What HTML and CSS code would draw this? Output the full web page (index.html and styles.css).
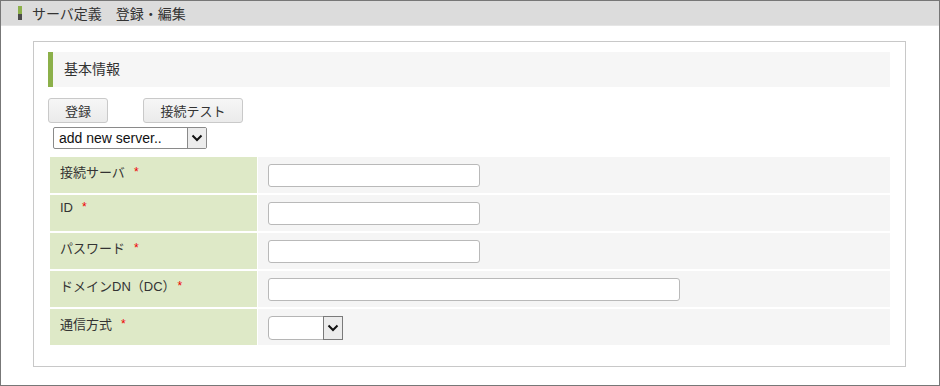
FILE: index.html
```html
<!DOCTYPE html>
<html lang="ja">
<head>
  <meta charset="UTF-8">
  <title>サーバ定義 登録・編集</title>
  <link rel="stylesheet" href="styles.css">
</head>
<body>
  <div class="frame">
    <div class="titlebar">
      <span class="marker"></span>
      <span class="title">サーバ定義　登録・編集</span>
    </div>

    <div class="panel">
      <h2 class="section">基本情報</h2>

      <div class="buttons">
        <button type="button" class="btn btn-save">登録</button>
        <button type="button" class="btn btn-test">接続テスト</button>
      </div>

      <div class="select select-server">
        <span class="select-text">add new server..</span>
        <span class="select-arrow">
          <svg width="12" height="8" viewBox="0 0 12 8"><path d="M1.5 1.5 L6 6 L10.5 1.5" fill="none" stroke="#111" stroke-width="2"/></svg>
        </span>
      </div>

      <div class="form">
        <div class="label">接続サーバ<span class="req">*</span></div>
        <div class="value"><input type="text" class="field"></div>

        <div class="label">ID<span class="req">*</span></div>
        <div class="value"><input type="text" class="field"></div>

        <div class="label">パスワード<span class="req">*</span></div>
        <div class="value"><input type="password" class="field"></div>

        <div class="label">ドメインDN（DC）<span class="req req-wide">*</span></div>
        <div class="value"><input type="text" class="field field-wide"></div>

        <div class="label">通信方式<span class="req">*</span></div>
        <div class="value">
          <div class="select select-mode">
            <span class="select-text"></span>
            <span class="select-arrow">
              <svg width="12" height="8" viewBox="0 0 12 8"><path d="M1.5 1.5 L6 6 L10.5 1.5" fill="none" stroke="#111" stroke-width="2"/></svg>
            </span>
          </div>
        </div>
      </div>
    </div>
  </div>
</body>
</html>
```

FILE: styles.css
```css
:root {
  --green: #8cb04a;
  --label-bg: #dee9c7;
  --value-bg: #f5f5f5;
  --text: #333;
}

* {
  box-sizing: border-box;
}

body {
  margin: 0;
  padding: 0;
  font-family: "Liberation Sans", "Noto Sans CJK JP", sans-serif;
  color: var(--text);
  background: #fff;
}

.frame {
  width: 940px;
  height: 386px;
  border: 1px solid #777;
  overflow: hidden;
}

.titlebar {
  height: 25px;
  background: #dcdcdc;
  border-bottom: 1px solid #e6e6e6;
  display: flex;
  align-items: center;
  padding-left: 17px;
}

.marker {
  width: 4px;
  height: 14px;
  background: linear-gradient(to bottom, var(--green) 0 8px, #4b4b4b 8px);
  margin-right: 10px;
}

.title {
  font-size: 14px;
  color: #333;
}

.panel {
  margin: 15px 33px 0 32px;
  height: 326px;
  border: 1px solid #c8c8c8;
  padding: 10px 15px 10px 14px;
}

.section {
  margin: 0;
  height: 35px;
  line-height: 35px;
  font-size: 14px;
  font-weight: normal;
  padding-left: 11px;
  border-left: 5px solid var(--green);
  background: #f6f6f6;
}

.buttons {
  display: flex;
  gap: 35px;
  margin-top: 11px;
}

.btn {
  height: 25px;
  font-family: inherit;
  font-size: 13px;
  color: #333;
  background: linear-gradient(to bottom, #f6f6f6, #ebebeb);
  border: 1px solid #c9c9c9;
  border-radius: 3px;
  padding: 0;
}

.btn-save {
  width: 60px;
}

.btn-test {
  width: 100px;
}

.select {
  display: flex;
  background: #fff;
  border: 1px solid #8a8a8a;
  border-radius: 2px;
  font-size: 14px;
}

.select-text {
  flex: 1;
  padding-left: 5px;
  color: #111;
}

.select-arrow {
  width: 19px;
  background: #ececec;
  border-left: 1px solid #8a8a8a;
  display: flex;
  align-items: center;
  justify-content: center;
}

.select-server {
  width: 154px;
  height: 22px;
  line-height: 20px;
  margin: 4px 0 0 5px;
}

.select-mode {
  width: 75px;
  height: 24px;
  border-color: #b5b5b5;
  border-radius: 4px 2px 2px 4px;
}

.select-mode .select-arrow {
  width: 20px;
  border: 1px solid #7a7a7a;
  margin: -1px -1px -1px 0;
}

.form {
  display: grid;
  grid-template-columns: 207px 1fr;
  column-gap: 1px;
  row-gap: 2px;
  margin: 8px 0 0 2px;
}

.label {
  height: 36px;
  background: var(--label-bg);
  font-size: 13px;
  padding: 5px 0 0 10px;
  color: #333;
}

.req {
  color: #e00;
  font-size: 12px;
  margin-left: 9px;
  vertical-align: 1px;
}

.req-wide {
  margin-left: 2px;
}

.value {
  height: 36px;
  background: var(--value-bg);
  padding: 7px 0 0 10px;
}

.field {
  display: block;
  width: 212px;
  height: 23px;
  border: 1px solid #b9b9b9;
  border-radius: 3px;
  background: #fff;
  margin: 0;
  font-family: inherit;
}

.field-wide {
  width: 412px;
}
```
